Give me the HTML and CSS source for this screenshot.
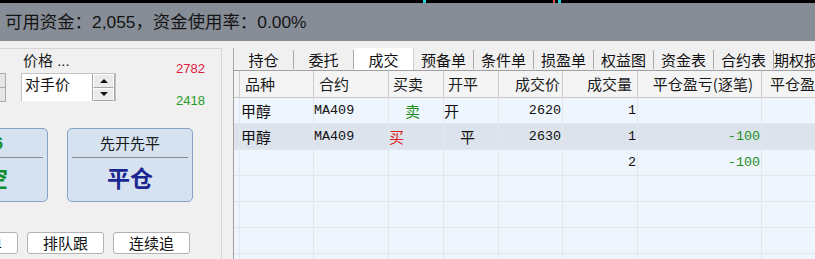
FILE: index.html
```html
<!DOCTYPE html>
<html lang="zh-CN">
<head>
  <meta charset="UTF-8" />
  <title>成交记录</title>
  <link rel="stylesheet" href="styles.css">
</head>
<body>
  <div class="chart-strip"></div>
  <div class="fundbar">可用资金：2,055，资金使用率：0.00%</div>

  <div class="main">
    <div class="order-panel">
      <div class="pricing">
        <div class="qty-stub"><span></span><span></span></div>
        <div class="price-col">
          <div class="price-label">价格 ...</div>
          <div class="combo">
            <div class="combo-text">对手价</div>
            <div class="spin">
              <div class="spin-btn up"></div>
              <div class="spin-btn down"></div>
            </div>
          </div>
        </div>
        <div class="quotes">
          <div class="ask">2782</div>
          <div class="bid">2418</div>
        </div>
      </div>

      <div class="big-buttons">
        <div class="big-btn sell">
          <div class="big-top">2776</div>
          <div class="big-main">开空</div>
        </div>
        <div class="big-btn">
          <div class="big-top">先开先平</div>
          <div class="big-main">平仓</div>
        </div>
      </div>

      <div class="small-buttons">
        <button type="button">超价单</button>
        <button type="button">排队跟</button>
        <button type="button">连续追</button>
      </div>
    </div>

    <div class="records">
      <div class="tabs">
        <div class="tab">持仓</div>
        <div class="tab">委托</div>
        <div class="tab active">成交</div>
        <div class="tab">预备单</div>
        <div class="tab">条件单</div>
        <div class="tab">损盈单</div>
        <div class="tab">权益图</div>
        <div class="tab">资金表</div>
        <div class="tab">合约表</div>
        <div class="tab">期权报价</div>
      </div>

      <div class="grid">
        <div class="row head">
          <div class="c"></div>
          <div class="c pl5">品种</div>
          <div class="c pl5">合约</div>
          <div class="c pl4">买卖</div>
          <div class="c pl4">开平</div>
          <div class="c num pr2">成交价</div>
          <div class="c num pr5">成交量</div>
          <div class="c num pr8">平仓盈亏(逐笔)</div>
          <div class="c pl8">平仓盈亏(盯市)</div>
        </div>

        <div class="row">
          <div class="c"></div>
          <div class="c pl1">甲醇</div>
          <div class="c mono">MA409</div>
          <div class="c pl16 sell-txt">卖</div>
          <div class="c">开</div>
          <div class="c num mono pr1">2620</div>
          <div class="c num mono pr1">1</div>
          <div class="c num mono pr1"></div>
          <div class="c"></div>
        </div>

        <div class="row selected">
          <div class="c"></div>
          <div class="c pl1">甲醇</div>
          <div class="c mono">MA409</div>
          <div class="c buy-txt">买</div>
          <div class="c pl16">平</div>
          <div class="c num mono pr1">2630</div>
          <div class="c num mono pr1">1</div>
          <div class="c num mono pr1 loss">-100</div>
          <div class="c"></div>
        </div>

        <div class="row">
          <div class="c"></div>
          <div class="c"></div>
          <div class="c"></div>
          <div class="c"></div>
          <div class="c"></div>
          <div class="c"></div>
          <div class="c num mono pr1">2</div>
          <div class="c num mono pr1 loss">-100</div>
          <div class="c"></div>
        </div>

        <div class="row"><div class="c"></div><div class="c"></div><div class="c"></div><div class="c"></div><div class="c"></div><div class="c"></div><div class="c"></div><div class="c"></div><div class="c"></div></div>
        <div class="row"><div class="c"></div><div class="c"></div><div class="c"></div><div class="c"></div><div class="c"></div><div class="c"></div><div class="c"></div><div class="c"></div><div class="c"></div></div>
        <div class="row"><div class="c"></div><div class="c"></div><div class="c"></div><div class="c"></div><div class="c"></div><div class="c"></div><div class="c"></div><div class="c"></div><div class="c"></div></div>
        <div class="row"><div class="c"></div><div class="c"></div><div class="c"></div><div class="c"></div><div class="c"></div><div class="c"></div><div class="c"></div><div class="c"></div><div class="c"></div></div>
      </div>
    </div>
  </div>
</body>
</html>
```

FILE: styles.css
```css
body {
  margin: 0;
  width: 815px;
  height: 259px;
  overflow: hidden;
  background: #f0f0f0;
  font-family: "Liberation Sans", "Noto Sans CJK SC", sans-serif;
  color: #111;
}

/* top strip of the chart above */
.chart-strip {
  height: 3px;
  background:
    linear-gradient(to right,
      #000 0 423px, #22d3dc 423px 426px,
      #000 426px 553px, #d9574f 553px 555px,
      #000 555px 558px, #22d3dc 558px 561px,
      #000 561px);
}

.fundbar {
  height: 38px;
  line-height: 38px;
  padding-left: 5px;
  background: #878d96;
  font-size: 17.4px;
  color: #141414;
  white-space: nowrap;
}

.main {
  display: flex;
  height: 218px;
}

/* left order panel */
.order-panel {
  width: 221px;
  flex: none;
  margin-top: 7px;
  border-top: 1px solid #d6d6d6;
  border-right: 1px solid #d6d6d6;
  overflow: hidden;
}

.pricing {
  display: flex;
  height: 79px;
}

.qty-stub {
  width: 5px;
  height: 27px;
  margin-top: 24px;
  border: 1px solid #a9a9a9;
  border-left: none;
  display: flex;
  flex-direction: column;
}

.qty-stub span {
  flex: 1;
  background: #e6e6e6;
}

.qty-stub span + span {
  border-top: 1px solid #a9a9a9;
}

.price-col {
  margin-left: 15px;
}

.price-label {
  height: 24px;
  line-height: 24px;
  padding-left: 2px;
  font-size: 15px;
  color: #1e1e1e;
}

.combo {
  display: flex;
  width: 95px;
  height: 29px;
  box-sizing: border-box;
  background: #fff;
  border: 1px solid #c4c4c4;
  border-bottom-color: #f4f4f4;
}

.combo-text {
  flex: 1;
  padding: 2px 0 0 3px;
  font-size: 15px;
  line-height: 18px;
}

.spin {
  width: 21px;
  display: flex;
  flex-direction: column;
  border: 1px solid #a6a6a6;
  border-top: none;
  border-bottom: none;
}

.spin-btn {
  flex: 1;
  display: flex;
  align-items: center;
  justify-content: center;
  background: #ebebeb;
  border: 1px solid #fff;
  border-bottom-color: #a6a6a6;
}

.spin-btn::before {
  content: "";
  border-left: 4px solid transparent;
  border-right: 4px solid transparent;
}

.spin-btn.up::before {
  border-bottom: 4px solid #111;
}

.spin-btn.down::before {
  border-top: 4px solid #111;
}

.quotes {
  margin-left: 60px;
  padding-top: 13px;
  display: flex;
  flex-direction: column;
  gap: 18px;
  font-size: 13px;
  line-height: 14px;
}

.ask { color: #e0203a; }
.bid { color: #2a9a2a; }

.big-buttons {
  display: flex;
  gap: 19px;
  margin-left: -78px;
}

.big-btn {
  width: 126px;
  height: 74px;
  flex: none;
  box-sizing: border-box;
  padding: 0 4px;
  background: #d6e2f0;
  border: 1px solid #87a2c6;
  border-radius: 5px;
  text-align: center;
}

.big-top {
  height: 28px;
  line-height: 30px;
  font-size: 15px;
  border-bottom: 1px solid #8a8a8a;
  color: #1a1a1a;
}

.big-main {
  line-height: 42px;
  font-size: 23px;
  font-weight: 700;
  color: #1b2790;
}

.sell .big-top {
  font-weight: 700;
  font-size: 16px;
  color: #10902e;
}

.sell .big-main {
  color: #10902e;
}

.small-buttons {
  display: flex;
  gap: 9px;
  margin: 30px 0 0 -59px;
}

.small-buttons button {
  width: 77px;
  height: 22px;
  flex: none;
  padding: 0;
  background: #fff;
  border: 1px solid #b3b3b3;
  border-radius: 3px;
  font-family: "Noto Sans CJK SC", sans-serif;
  font-size: 15px;
  line-height: 18px;
  color: #111;
}

/* right records area */
.records {
  flex: 1;
  margin-left: 11px;
  overflow: hidden;
  font-family: "Noto Sans CJK SC", sans-serif;
}

.tabs {
  display: flex;
  height: 22px;
  margin-top: 7px;
  border-left: 1px solid #a9a9a9;
}

.tab {
  width: 60px;
  flex: none;
  box-sizing: border-box;
  margin: 2px 0 1px;
  border-right: 1px solid #a9a9a9;
  text-align: center;
  font-size: 15px;
  line-height: 19px;
  color: #111;
  white-space: nowrap;
  overflow: hidden;
}

.tab.active {
  margin: 0;
  padding-top: 2px;
  background: #fff;
  border-right-color: #d0d0d0;
}

.grid {
  width: 720px;
  border-top: 1px solid #a0a0a0;
  border-left: 1px solid #a0a0a0;
  background: #eff5fc;
}

.row {
  display: grid;
  grid-template-columns: 6px 74px 75px 55px 55px 64px 75px 124px 190px;
  height: 26px;
  box-sizing: border-box;
  border-bottom: 1px solid #e2e7ee;
}

.c {
  box-sizing: border-box;
  border-right: 1px solid #e2e7ee;
  font-size: 15px;
  line-height: 25px;
  white-space: nowrap;
  overflow: hidden;
}

.row.head {
  height: 27px;
  background: #f4f4f4;
  border-bottom: 1px solid #c9c9c9;
}

.row.head .c {
  border-right-color: #cdcdcd;
  line-height: 26px;
  color: #1a1a1a;
}

.row.selected {
  background: #dce3ec;
}

.mono {
  font-family: "Liberation Mono", monospace;
  font-size: 13.4px;
}

.num { text-align: right; }

.pl1 { padding-left: 1px; }
.pl4 { padding-left: 4px; }
.pl5 { padding-left: 5px; }
.pl8 { padding-left: 8px; }
.pl16 { padding-left: 16px; }
.pr1 { padding-right: 1px; }
.pr2 { padding-right: 2px; }
.pr5 { padding-right: 5px; }
.pr8 { padding-right: 8px; }

.sell-txt { color: #1d8f1d; }
.buy-txt { color: #e02020; }
.loss { color: #1f8f1f; }
```
